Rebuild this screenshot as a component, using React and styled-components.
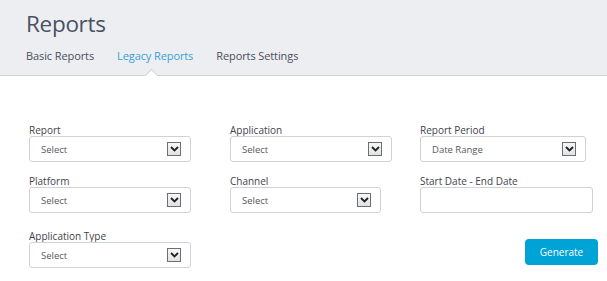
import React from "react";
import styled, { createGlobalStyle } from "styled-components";

const Global = createGlobalStyle`
  html, body { margin: 0; padding: 0; background: #fff; }
  body { font-family: "Open Sans", "Noto Sans", sans-serif; color: #4a4f5a; }
  * { box-sizing: border-box; }
`;

const Header = styled.header`
  position: relative;
  height: 76px;
  background: #edeef2;
  border-bottom: 1px solid #d2d2d2;
  padding: 9px 0 0 26px;
`;

const Title = styled.h1`
  margin: 0;
  font-size: 22.5px;
  font-weight: 400;
  line-height: 30px;
  color: #4b5161;
  letter-spacing: -0.3px;
`;

const Tabs = styled.nav`
  display: flex;
  gap: 23px;
  margin-top: 9px;
`;

const Tab = styled.span`
  font-size: 11px;
  line-height: 16px;
  color: ${(p) => (p.$active ? "#3a9fd5" : "#4b4f58")};
  letter-spacing: -0.1px;
`;

const Caret = styled.span`
  position: absolute;
  left: 144px;
  bottom: -1px;
  width: 14px;
  height: 8px;
  overflow: hidden;
  &::before {
    content: "";
    position: absolute;
    left: 2px;
    top: 3px;
    width: 9px;
    height: 9px;
    background: #fff;
    border: 1px solid #d2d2d2;
    transform: rotate(45deg);
  }
`;

const Form = styled.main`
  display: grid;
  grid-template-columns: 201px 190px 1fr;
  grid-template-rows: 51px 55px 53px;
  padding: 48px 9px 0 29px;
`;

const Field = styled.div`
  display: flex;
  flex-direction: column;
  width: ${(p) => p.$w}px;
`;

const Label = styled.label`
  font-size: 10px;
  line-height: 12px;
  height: 12px;
  color: #3f434b;
`;

const SelectBox = styled.div`
  display: flex;
  align-items: center;
  justify-content: space-between;
  height: 26px;
  border: 1px solid #cfd2d6;
  border-radius: 3px;
  background: #fff;
  padding: 0 9px 0 11px;
  font-size: 9.5px;
  color: #555a62;
`;

const Arrow = styled.span`
  display: flex;
  align-items: center;
  justify-content: center;
  width: 14px;
  height: 14px;
  border: 1px solid #6b6e73;
  background: linear-gradient(#f7f7f7, #e2e2e2);
`;

const Input = styled.div`
  height: 26px;
  border: 1px solid #cfd2d6;
  border-radius: 3px;
  background: #fff;
`;

const Actions = styled.div`
  display: flex;
  justify-content: flex-end;
  align-items: flex-start;
  padding-top: 9px;
`;

const Button = styled.button`
  width: 73px;
  height: 26px;
  border: none;
  border-radius: 4px;
  background: #00a3d6;
  color: #fff;
  font-family: inherit;
  font-size: 10px;
  padding: 0;
`;

const Chevron = () => (
  <svg width="9" height="6" viewBox="0 0 9 6">
    <path d="M1 1l3.5 3.5L8 1" fill="none" stroke="#1e2126" strokeWidth="1.8" />
  </svg>
);

const Select = ({ label, value = "Select", w }) => (
  <Field $w={w}>
    <Label>{label}</Label>
    <SelectBox>
      <span>{value}</span>
      <Arrow>
        <Chevron />
      </Arrow>
    </SelectBox>
  </Field>
);

export default function App() {
  return (
    <>
      <Global />
      <Header>
        <Title>Reports</Title>
        <Tabs>
          <Tab>Basic Reports</Tab>
          <Tab $active>Legacy Reports</Tab>
          <Tab>Reports Settings</Tab>
        </Tabs>
        <Caret />
      </Header>
      <Form>
        <Select label="Report" w={162} />
        <Select label="Application" w={162} />
        <Select label="Report Period" value="Date Range" w={166} />
        <Select label="Platform" w={162} />
        <Select label="Channel" w={151} />
        <Field $w={173}>
          <Label>Start Date - End Date</Label>
          <Input />
        </Field>
        <Select label="Application Type" w={162} />
        <div />
        <Actions>
          <Button>Generate</Button>
        </Actions>
      </Form>
    </>
  );
}
